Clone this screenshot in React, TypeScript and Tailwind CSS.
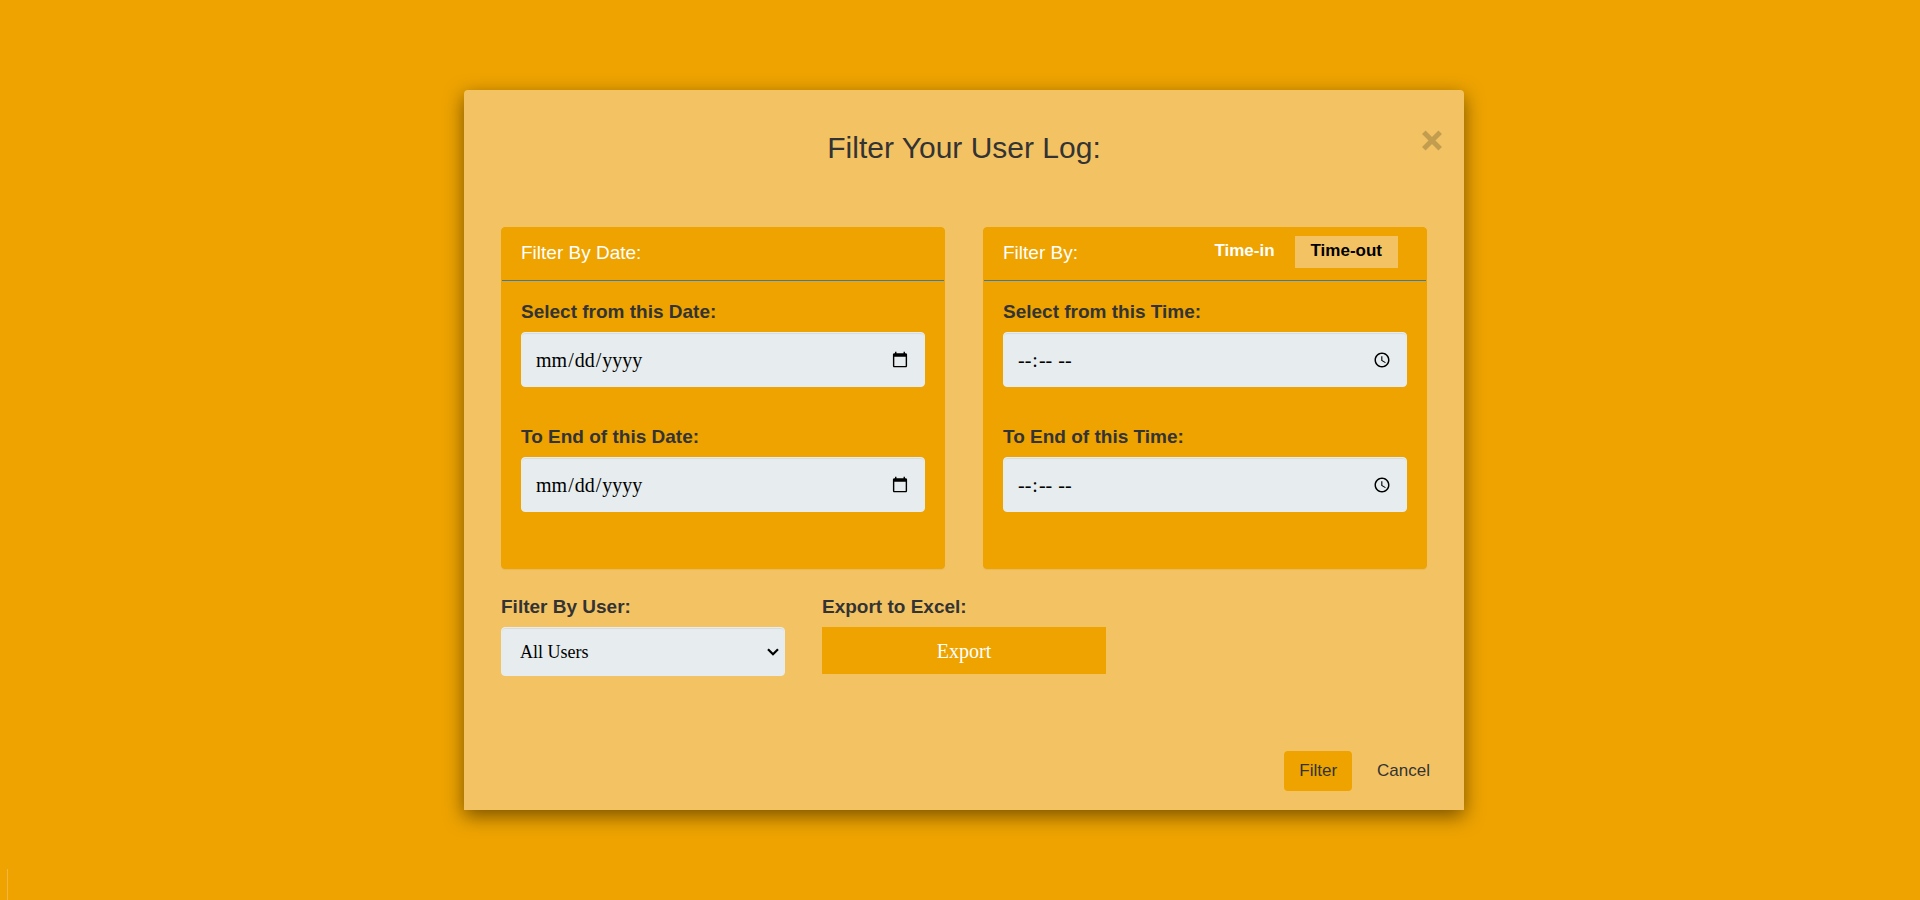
import React, { useState } from "react";

type FieldProps = { id: string; label: string; type: "date" | "time" };

function Field({ id, label, type }: FieldProps) {
  return (
    <div className="flex flex-col gap-2">
      <label htmlFor={id} className="text-[19px] leading-6 font-bold">
        {label}
      </label>
      <input
        id={id}
        type={type}
        className="h-[55px] w-full rounded border border-[#e7edee] bg-[#e7edee] pr-[15px] pl-[13px] font-[Georgia,'Liberation_Serif',serif] text-xl text-black shadow-[inset_0_1px_1px_rgba(0,0,0,0.075)] [&::-webkit-calendar-picker-indicator]:size-[18px] [&::-webkit-calendar-picker-indicator]:p-0"
      />
    </div>
  );
}

type PanelProps = {
  title: string;
  actions?: React.ReactNode;
  children: React.ReactNode;
};

function Panel({ title, actions, children }: PanelProps) {
  return (
    <section className="rounded border border-[#eea300] bg-[#eea300] shadow-[0_1px_1px_rgba(0,0,0,0.05)]">
      <header className="flex h-[53px] items-start justify-between border-b border-[#337ab7] pt-2 pr-7 pl-[19px]">
        <h2 className="pt-[5px] text-[19px] leading-6 text-white">{title}</h2>
        {actions}
      </header>
      <div className="flex flex-col gap-[38px] px-[19px] pt-[19px] pb-14">{children}</div>
    </section>
  );
}

type Mode = "Time-in" | "Time-out";
const modes: Mode[] = ["Time-in", "Time-out"];

export default function App() {
  const [mode, setMode] = useState<Mode>("Time-out");

  return (
    <div className="flex min-h-screen bg-[#eea300] font-['Liberation_Sans',Arial,sans-serif] text-[#333333]">
      <div className="flex w-2 flex-col justify-end">
        <div className="h-[31px] border-r border-[#f3b741]" />
      </div>
      <main className="flex flex-1 items-center justify-center">
        <div
          role="dialog"
          aria-labelledby="dialog-title"
          className="w-full max-w-[1000px] rounded-t bg-[#f3c363] shadow-[0_6px_19px_rgba(0,0,0,0.5)]"
        >
          <div className="relative px-[37px] pt-[39px] pb-[60px]">
            <h1 id="dialog-title" className="text-center text-3xl leading-[38px]">
              Filter Your User Log:
            </h1>
            <button
              type="button"
              aria-label="Close"
              className="absolute top-10 right-[21px] text-[#c29c4f]"
            >
              <svg viewBox="0 0 22 22" className="size-[22px]" aria-hidden="true">
                <path
                  d="M2.8 2.3 19.2 18.7M19.2 2.3 2.8 18.7"
                  fill="none"
                  stroke="currentColor"
                  strokeWidth="5"
                />
              </svg>
            </button>
          </div>

          <form onSubmit={(e) => e.preventDefault()}>
            <div className="grid grid-cols-2 gap-[38px] px-[37px]">
              <Panel title="Filter By Date:">
                <Field id="date-from" label="Select from this Date:" type="date" />
                <Field id="date-to" label="To End of this Date:" type="date" />
              </Panel>
              <Panel
                title="Filter By:"
                actions={
                  <div className="flex gap-1">
                    {modes.map((m) => (
                      <button
                        key={m}
                        type="button"
                        aria-pressed={mode === m}
                        onClick={() => setMode(m)}
                        className={
                          mode === m
                            ? "h-8 bg-[#f3c363] px-4 pb-0.5 text-[17px] leading-6 font-bold text-black"
                            : "h-8 px-4 pb-0.5 text-[17px] leading-6 font-bold text-white"
                        }
                      >
                        {m}
                      </button>
                    ))}
                  </div>
                }
              >
                <Field id="time-from" label="Select from this Time:" type="time" />
                <Field id="time-to" label="To End of this Time:" type="time" />
              </Panel>
            </div>

            <div className="grid grid-cols-3 items-start gap-[37px] px-[37px] pt-[26px]">
              <div className="flex flex-col gap-2">
                <label htmlFor="user" className="text-[19px] leading-6 font-bold">
                  Filter By User:
                </label>
                <div className="relative">
                  <select
                    id="user"
                    className="h-[49px] w-full appearance-none rounded border border-[#e7edee] bg-[#e7edee] px-[18px] font-[Georgia,'Liberation_Serif',serif] text-lg text-black shadow-[inset_0_1px_1px_rgba(0,0,0,0.075)]"
                  >
                    <option>All Users</option>
                  </select>
                  <svg
                    viewBox="0 0 12 8"
                    className="pointer-events-none absolute top-[21px] right-[6px] h-2 w-3"
                    aria-hidden="true"
                  >
                    <path d="M1 1.2 6 6.2 11 1.2" fill="none" stroke="#000" strokeWidth="2.2" />
                  </svg>
                </div>
              </div>
              <div className="flex flex-col gap-2">
                <span id="export-label" className="text-[19px] leading-6 font-bold">
                  Export to Excel:
                </span>
                <button
                  type="button"
                  aria-describedby="export-label"
                  className="h-[47px] w-full bg-[#eea300] font-[Georgia,'Liberation_Serif',serif] text-xl text-white"
                >
                  Export
                </button>
              </div>
            </div>

            <div className="flex justify-end gap-[10px] pt-[75px] pr-[19px] pb-[19px]">
              <button type="submit" className="h-10 rounded bg-[#eea300] px-[15px] text-[17px]">
                Filter
              </button>
              <button type="button" className="h-10 px-[15px] text-[17px]">
                Cancel
              </button>
            </div>
          </form>
        </div>
      </main>
    </div>
  );
}
